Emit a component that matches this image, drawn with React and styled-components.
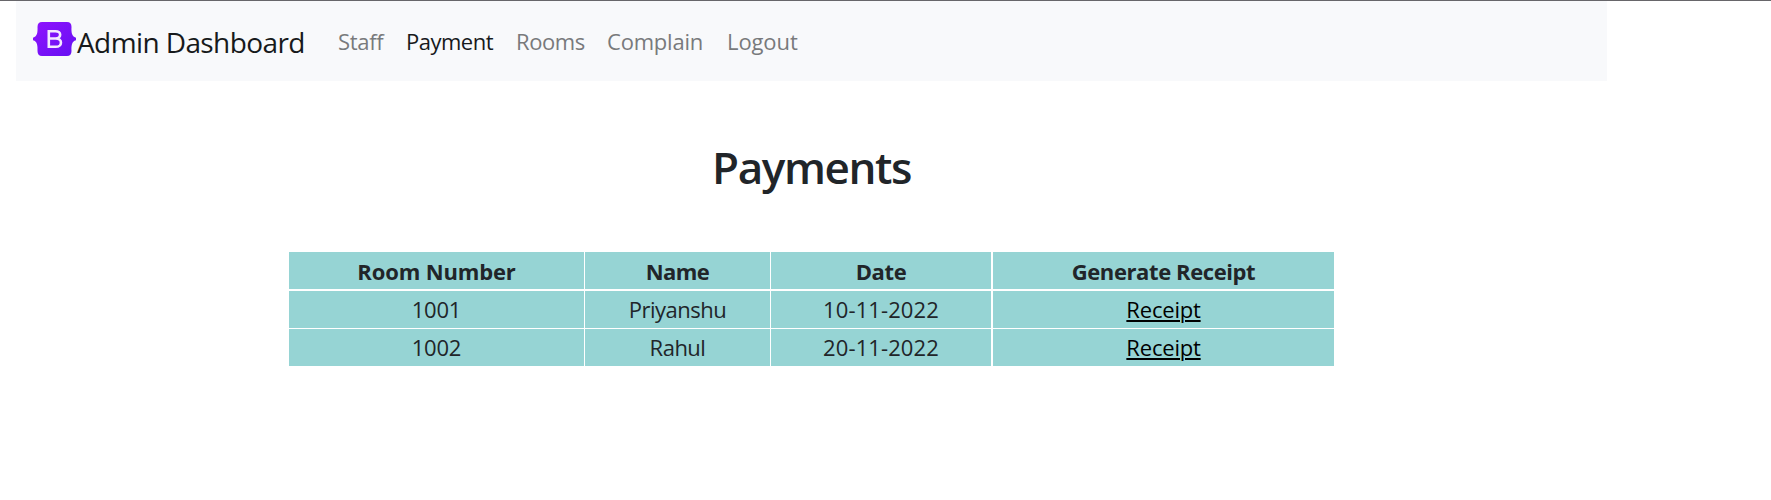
import React from "react";
import styled, { createGlobalStyle } from "styled-components";

const GlobalStyle = createGlobalStyle`
  *, *::before, *::after { box-sizing: border-box; }
  body {
    margin: 0;
    background: #fff;
    color: #212529;
    font-family: "Open Sans", "Noto Sans", sans-serif;
    font-size: 22px;
    font-weight: 400;
    line-height: 1.5;
  }
`;

const Page = styled.div`
  height: 500px;
  border-top: 1px solid #67666a;
  overflow: hidden;
`;

const Navbar = styled.nav`
  display: flex;
  align-items: center;
  width: 1591px;
  height: 80px;
  margin-left: 16px;
  padding-left: 17px;
  background: #f8f9fb;
  white-space: nowrap;
`;

const Brand = styled.a`
  display: flex;
  align-items: center;
  width: 305px;
  padding-top: 2px;
  color: #17191b;
  font-size: 28px;
  letter-spacing: -0.6px;
`;

const Logo = styled.svg`
  width: 43px;
  height: 34px;
  flex: none;
  margin: -6px 1px 0 0;
`;

const NavLinks = styled.div`
  display: flex;
`;

const NavLink = styled.a`
  width: ${(p) => p.$width}px;
  color: ${(p) => (p.$active ? "#17191b" : "#787a7c")};
  letter-spacing: ${(p) => p.$tracking}px;
`;

const Main = styled.main`
  width: 1045px;
  margin-left: 289px;
`;

const Title = styled.h1`
  margin: 60px 0 0;
  height: 111px;
  font-size: 44px;
  font-weight: 600;
  line-height: 53px;
  text-align: center;
  letter-spacing: -1.4px;
`;

const Table = styled.div`
  display: grid;
  row-gap: 1px;
`;

const Row = styled.div`
  display: grid;
  grid-template-columns: 295px 185px 220px 341px;
  column-gap: 1px;
  height: 37px;
  margin-bottom: ${(p) => (p.$head ? 1 : 0)}px;
  font-weight: ${(p) => (p.$head ? 700 : 400)};
`;

const Cell = styled.div`
  display: flex;
  align-items: center;
  justify-content: center;
  padding-top: ${(p) => (p.$head ? 2 : 0)}px;
  background: #96d4d4;
  white-space: nowrap;
  letter-spacing: ${(p) => p.$tracking || 0}px;
  &:last-child { margin-left: 1px; margin-right: -1px; }
`;

const ReceiptLink = styled.a`
  color: #000;
  text-decoration: underline;
  text-decoration-thickness: 2px;
  text-underline-offset: 2px;
`;

const links = [
  { label: "Staff", width: 68, tracking: -0.3 },
  { label: "Payment", width: 110, tracking: -0.5, active: true },
  { label: "Rooms", width: 91, tracking: -0.4 },
  { label: "Complain", width: 120, tracking: -0.2 },
  { label: "Logout", width: 74, tracking: -0.1 },
];

const payments = [
  { room: "1001", name: "Priyanshu", date: "10-11-2022" },
  { room: "1002", name: "Rahul", date: "20-11-2022" },
];

function BootstrapLogo() {
  return (
    <Logo viewBox="0 0 43 34" aria-label="Bootstrap">
      <defs>
        <linearGradient id="brand" x1="0" y1="0" x2="1" y2="1">
          <stop offset="0" stopColor="#9013fe" />
          <stop offset="1" stopColor="#6610f2" />
        </linearGradient>
      </defs>
      <path
        fill="url(#brand)"
        d="M9 0H34Q38.5 0 38.5 5C38.3 10 38.5 14.5 43 15.7V18.3C38.5 19.5 38.3 24 38.5 29Q38.5 34 34 34H9Q4.5 34 4.5 29C4.7 24 4.5 19.5 0 18.3V15.7C4.5 14.5 4.7 10 4.5 5Q4.5 0 9 0Z"
      />
      <path
        fill="none"
        stroke="#f4eaff"
        strokeWidth="2.6"
        d="M15.8 9.2H22.5C28.7 9.2 28.7 16.5 22.5 16.5H15.8V9.2ZM15.8 16.5H22.7C29.7 16.5 29.7 24.8 22.7 24.8H15.8V16.5Z"
      />
    </Logo>
  );
}

export default function App() {
  return (
    <>
      <GlobalStyle />
      <Page>
        <Navbar>
          <Brand>
            <BootstrapLogo />
            Admin Dashboard
          </Brand>
          <NavLinks>
            {links.map((l) => (
              <NavLink key={l.label} $width={l.width} $tracking={l.tracking} $active={l.active}>
                {l.label}
              </NavLink>
            ))}
          </NavLinks>
        </Navbar>
        <Main>
          <Title>Payments</Title>
          <Table>
            <Row $head>
              <Cell $head $tracking={-0.15}>Room Number</Cell>
              <Cell $head $tracking={-0.6}>Name</Cell>
              <Cell $head $tracking={-0.4}>Date</Cell>
              <Cell $head $tracking={-0.4}>Generate Receipt</Cell>
            </Row>
            {payments.map((p) => (
              <Row key={p.room}>
                <Cell $tracking={-0.2}>{p.room}</Cell>
                <Cell $tracking={-0.5}>{p.name}</Cell>
                <Cell $tracking={0.1}>{p.date}</Cell>
                <Cell $tracking={-0.2}>
                  <ReceiptLink>Receipt</ReceiptLink>
                </Cell>
              </Row>
            ))}
          </Table>
        </Main>
      </Page>
    </>
  );
}
